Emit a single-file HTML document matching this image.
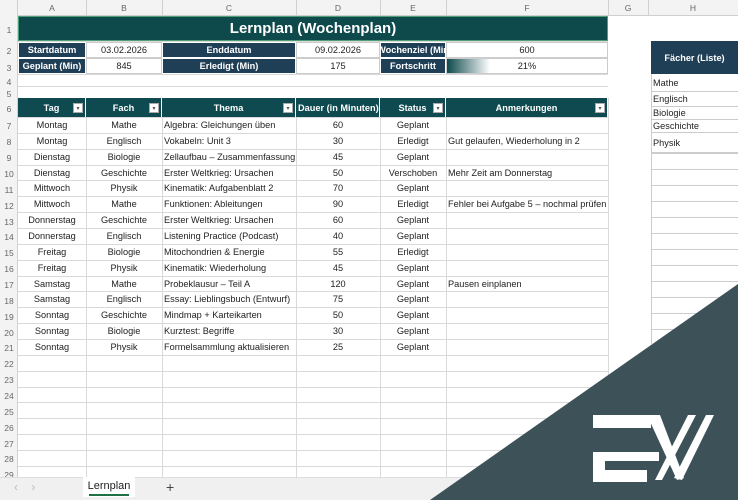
<!DOCTYPE html>
<html><head><meta charset="utf-8"><style>
*{margin:0;padding:0;box-sizing:border-box}
body{width:738px;height:500px;overflow:hidden;background:#fff;font-family:"Liberation Sans",sans-serif;font-size:9.2px;color:#222;position:relative}
.c{position:absolute;display:flex;align-items:center;justify-content:center;white-space:nowrap;overflow:hidden}
.l{justify-content:flex-start;padding-left:2px}
.hl{position:absolute;background:#d9d9d9;height:1px}
.vl{position:absolute;background:#d9d9d9;width:1px}
.dk{background:#1f3f57;color:#fff;font-weight:bold}
.tk{background:#0e4a4f;color:#fff;font-weight:bold}
.dd{position:absolute;width:10px;height:10px;background:#fff;border:1px solid #aaa;font-size:6px;color:#555;display:flex;align-items:center;justify-content:center}
</style></head><body>
<div style="position:absolute;left:0;top:0;width:738px;height:16px;background:#f3f3f3;border-bottom:1px solid #d0d0d0"></div>
<div style="position:absolute;left:0;top:0;width:18px;height:500px;background:#f3f3f3;border-right:1px solid #d0d0d0"></div>
<div id="g"></div>
<script>
const cols=[18,86,162,296,380,446,608,648,738];
const names=['A','B','C','D','E','F','G','H'];
let h='';
for(let i=0;i<8;i++)h+=`<div class="c" style="left:${cols[i]}px;top:0;width:${cols[i+1]-cols[i]}px;height:16px;color:#666;font-size:8.5px">${names[i]}</div><div class="vl" style="left:${cols[i+1]}px;top:0;height:16px;background:#d0d0d0"></div>`;
const rows=[16,41,58,74,86,98,117];
for(let r=7;r<=30;r++)rows.push(117+(r-6)*15.86);
for(let r=1;r<=29;r++){let t=rows[r-1],b=rows[r];h+=`<div class="c" style="left:0;top:${t}px;width:18px;height:${b-t}px;color:#666;font-size:8.5px;padding-top:3px">${r}</div>`;
h+=`<div class="hl" style="left:18px;top:${b}px;width:590px"></div>`;}
for(let i=1;i<7;i++)h+=`<div class="vl" style="left:${cols[i]}px;top:98px;height:380px"></div>`;
const data=[["Montag","Mathe","Algebra: Gleichungen üben","60","Geplant",""],
["Montag","Englisch","Vokabeln: Unit 3","30","Erledigt","Gut gelaufen, Wiederholung in 2"],
["Dienstag","Biologie","Zellaufbau – Zusammenfassung","45","Geplant",""],
["Dienstag","Geschichte","Erster Weltkrieg: Ursachen","50","Verschoben","Mehr Zeit am Donnerstag"],
["Mittwoch","Physik","Kinematik: Aufgabenblatt 2","70","Geplant",""],
["Mittwoch","Mathe","Funktionen: Ableitungen","90","Erledigt","Fehler bei Aufgabe 5 – nochmal prüfen"],
["Donnerstag","Geschichte","Erster Weltkrieg: Ursachen","60","Geplant",""],
["Donnerstag","Englisch","Listening Practice (Podcast)","40","Geplant",""],
["Freitag","Biologie","Mitochondrien & Energie","55","Erledigt",""],
["Freitag","Physik","Kinematik: Wiederholung","45","Geplant",""],
["Samstag","Mathe","Probeklausur – Teil A","120","Geplant","Pausen einplanen"],
["Samstag","Englisch","Essay: Lieblingsbuch (Entwurf)","75","Geplant",""],
["Sonntag","Geschichte","Mindmap + Karteikarten","50","Geplant",""],
["Sonntag","Biologie","Kurztest: Begriffe","30","Geplant",""],
["Sonntag","Physik","Formelsammlung aktualisieren","25","Geplant",""]];
data.forEach((d,j)=>{let t=rows[6+j],hh=rows[7+j]-t;d.forEach((v,i)=>{let cl=(i==2||i==5)?'c l':'c';h+=`<div class="${cl}" style="left:${cols[i]}px;top:${t}px;width:${cols[i+1]-cols[i]}px;height:${hh}px">${v}</div>`})});
const hd=["Tag","Fach","Thema","Dauer (in Minuten)","Status","Anmerkungen"];
hd.forEach((v,i)=>{h+=`<div class="c tk" style="left:${cols[i]}px;top:98px;width:${cols[i+1]-cols[i]}px;height:19px;border-right:1px solid #fff;${i==3?'justify-content:flex-start;padding-left:2px':''}">${v}</div>`;
if(i!=3)h+=`<div class="dd" style="left:${cols[i+1]-13}px;top:103px">▾</div>`;});
h+=`<div class="c" style="left:18px;top:16px;width:590px;height:25px;background:#0e4a4c;color:#fff;font-weight:bold;font-size:15px;border:1px solid #4f9e7a">Lernplan (Wochenplan)</div>`;
const cell=(x,y,w,hh,t,cls)=>h+=`<div class="c ${cls}" style="left:${x}px;top:${y}px;width:${w}px;height:${hh}px;border:1px solid #ccc;${cls?'border-color:#fff':''}">${t}</div>`;
cell(18,42,68,16,"Startdatum","dk");cell(86,42,76,16,"03.02.2026","");cell(162,42,134,16,"Enddatum","dk");cell(296,42,84,16,"09.02.2026","");
cell(380,42,66,16,"Wochenziel (Min","dk");cell(446,42,162,16,"600","");
cell(18,58,68,16,"Geplant (Min)","dk");cell(86,58,76,16,"845","");cell(162,58,134,16,"Erledigt (Min)","dk");cell(296,58,84,16,"175","");
cell(380,58,66,16,"Fortschritt","dk");cell(446,58,162,16,"21%","");
h+=`<div style="position:absolute;left:447px;top:59px;width:43px;height:14px;background:linear-gradient(90deg,#0e4a4c,#fff)"></div>`;
h+=`<div class="c dk" style="left:651px;top:41px;width:87px;height:33px">Fächer (Liste)</div>`;
[["Mathe",74,92],["Englisch",92,107],["Biologie",107,120],["Geschichte",120,133],["Physik",133,153]].forEach(a=>{h+=`<div class="c l" style="left:651px;top:${a[1]}px;width:87px;height:${a[2]-a[1]}px;border-bottom:1px solid #ccc">${a[0]}</div>`});
h+=`<div class="vl" style="left:651px;top:74px;height:270px;background:#ccc"></div>`;
for(let y=153;y<345;y+=16)h+=`<div class="hl" style="left:651px;top:${y}px;width:87px;background:#ccc"></div>`;
document.getElementById('g').innerHTML=h;
</script>
<div style="position:absolute;left:0;top:477px;width:738px;height:23px;background:#f0f0f0;border-top:1px solid #ddd"></div>
<div style="position:absolute;left:14px;top:480px;color:#bbb;font-size:12px">‹&nbsp;&nbsp;&nbsp;&nbsp;›</div>
<div style="position:absolute;left:83px;top:477px;width:52px;height:20px;background:#fff;font-size:11px;text-align:center;padding-top:3px">Lernplan<div style="margin:2px auto 0;width:40px;height:2px;background:#1e7145"></div></div>
<div style="position:absolute;left:166px;top:479px;font-size:14px;color:#444">+</div>
<svg style="position:absolute;left:0;top:0" width="738" height="500">
<polygon points="430,500 738,284 738,500" fill="#3d5159"/>
<g fill="#fff">
<rect x="593" y="415" width="58" height="13"/>
<rect x="593" y="452" width="66" height="9"/>
<rect x="593" y="452" width="12" height="30"/>
<rect x="593" y="470" width="54" height="12"/>
<polygon points="647,415 660,415 684,478 677,480"/>
<polygon points="706,415 714,415 682,480 674,478"/>
<polygon points="688,415 696,415 662,480 655,480"/>
</g>
</svg>
</body></html>
